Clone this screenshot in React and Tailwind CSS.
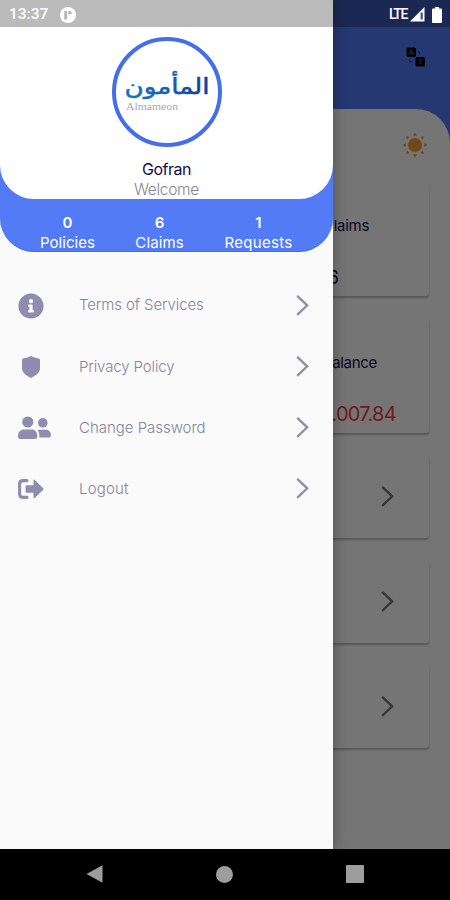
import React from 'react';
import { FaInfoCircle } from 'react-icons/fa';

const stats = [
  { value: '0', label: 'Policies', width: 'w-[55px]', spacing: 'tracking-[0.05px]' },
  { value: '6', label: 'Claims', width: 'w-[49px]', spacing: 'tracking-[0.1px]' },
  { value: '1', label: 'Requests', width: 'w-[69px]', spacing: 'tracking-[0.3px]' },
];

function ShieldIcon() {
  return (
    <svg width="18" height="22" viewBox="0 0 18 22" fill="currentColor" className="ml-1">
      <path d="M9 0C7 1.2 4 2.1 1.2 2.4Q0 2.6 0 3.8V12C0 16.6 4 19.6 9 22C14 19.6 18 16.6 18 12V3.8Q18 2.6 16.8 2.4C14 2.1 11 1.2 9 0Z" />
    </svg>
  );
}

function PeopleIcon() {
  return (
    <svg width="33" height="24" viewBox="0 0 33 24" fill="currentColor">
      <circle cx="9.8" cy="6" r="5.6" />
      <circle cx="24.8" cy="6.8" r="4.8" />
      <path d="M0 20.5C0 16 2.5 13.5 6 13.5H13.5C17 13.5 19.3 16 19.3 20.5Q19.3 23 17 23H2.3Q0 23 0 20.5Z" />
      <path d="M19.5 13.8H28C31 13.8 33 16 33 19.5Q33 21.5 31 21.5H21.3C21.5 18.5 21 15.6 19.5 13.8Z" />
    </svg>
  );
}

function LogoutIcon() {
  return (
    <svg width="26" height="20" viewBox="0 0 26 20">
      <path d="M9 1.6H5Q1.6 1.6 1.6 5V15Q1.6 18.4 5 18.4H9" fill="none" stroke="currentColor" strokeWidth="3.1" strokeLinecap="round" />
      <path
        d="M7.6 7Q7.6 6.2 8.4 6.2H15.5V1.6Q15.6 0.4 16.8 1L25.2 9.2Q26 10 25.2 10.8L16.8 19Q15.6 19.6 15.5 18.4V13.8H8.4Q7.6 13.8 7.6 13Z"
        fill="currentColor"
      />
    </svg>
  );
}

const menu = [
  { label: 'Terms of Services', icon: <FaInfoCircle size={26} />, spacing: 'tracking-[-0.1px]' },
  { label: 'Privacy Policy', icon: <ShieldIcon />, spacing: 'tracking-[-0.12px]' },
  { label: 'Change Password', icon: <PeopleIcon />, spacing: 'tracking-[-0.02px]' },
  { label: 'Logout', icon: <LogoutIcon />, spacing: 'tracking-[0.2px]' },
];

function Chevron() {
  return (
    <svg width="14" height="22" viewBox="0 0 14 22" fill="none" stroke="currentColor" strokeWidth="2.3">
      <path d="M1.2 0.8L11.2 10.3L1.2 19.8" />
    </svg>
  );
}

function TranslateIcon() {
  return (
    <svg width="20" height="20" viewBox="0 0 20 20">
      <rect x="0.5" y="0.5" width="9.5" height="9.5" rx="1.5" fill="#000" />
      <rect x="9.5" y="10" width="9.5" height="9.5" rx="1.5" fill="#000" />
      <path d="M3 8L5.2 2.8L7.4 8M3.8 6.3H6.6" fill="none" stroke="#6070a8" strokeWidth="0.8" />
      <path d="M12 13H16.5M14.3 12V13M12.5 17.5Q15.5 16 16 13M12.8 14.5L16.4 17.5" fill="none" stroke="#6070a8" strokeWidth="0.6" />
      <path d="M11.5 5H13.5V7M3.5 12V14.5H6" fill="none" stroke="#26387a" strokeWidth="0.9" />
    </svg>
  );
}

function SunIcon() {
  return (
    <svg width="26" height="26" viewBox="0 0 26 26" fill="#f2a02c">
      <circle cx="13" cy="13" r="7" />
      <path d="M13 0.5L15 3.8H11Z" />
      <path d="M13 25.5L15 22.2H11Z" />
      <path d="M0.5 13L3.8 11V15Z" />
      <path d="M25.5 13L22.2 11V15Z" />
      <path d="M4 4L7.5 5L5 7.5Z" />
      <path d="M22 4L18.5 5L21 7.5Z" />
      <path d="M4 22L7.5 21L5 18.5Z" />
      <path d="M22 22L18.5 21L21 18.5Z" />
    </svg>
  );
}

function Logo() {
  return (
    <div className="flex w-[86px] flex-col pb-[3px]">
      <svg width="86" height="32" viewBox="0 0 86 32">
        <defs>
          <linearGradient id="ink" x1="0" x2="1" y1="0" y2="0">
            <stop offset="0" stopColor="#1272c4" />
            <stop offset="0.5" stopColor="#1460b4" />
            <stop offset="1" stopColor="#0d3c9a" />
          </linearGradient>
        </defs>
        <text
          x="43"
          y="24"
          textAnchor="middle"
          textLength="85"
          lengthAdjust="spacingAndGlyphs"
          direction="rtl"
          fill="url(#ink)"
          stroke="url(#ink)"
          strokeWidth="0.5"
          className="font-['DejaVu_Sans',sans-serif] text-[22px]"
        >
          المأمون
        </text>
      </svg>
      <svg width="56" height="10" viewBox="0 0 56 10">
        <text
          x="2"
          y="7.5"
          textLength="52"
          lengthAdjust="spacingAndGlyphs"
          fill="#a8a8a8"
          className="font-['Liberation_Serif',serif] text-[10px] leading-none"
        >
          Almameon
        </text>
      </svg>
    </div>
  );
}

function StatusBar() {
  return (
    <div className="absolute inset-x-0 top-0 z-30 flex h-[27px] items-center bg-black/27 pl-[9px] pr-2 pt-[2px] font-['Roboto',sans-serif] text-white">
      <span className="text-[15.5px] font-medium">13:37</span>
      <svg className="ml-[12px]" width="16" height="16" viewBox="0 0 16 16">
        <circle cx="8" cy="8" r="8" fill="#fff" />
        <path d="M4.3 4H7V12.5H4.3ZM8.3 4H10Q11.8 4 11.8 5.7T10 7.4H8.3Z" fill="#b3b3b3" />
      </svg>
      <span className="ml-auto text-[14px] font-medium tracking-[-1.4px]">LTE</span>
      <svg className="ml-[3px]" width="15" height="15" viewBox="0 0 15 15">
        <path d="M0 14.5L14.5 0V14.5Z" fill="#fff" />
        <path d="M10.5 5.5H12.8V12.5H10.5Z" fill="#4a5580" />
      </svg>
      <svg className="ml-[7px]" width="10" height="16" viewBox="0 0 10 16" fill="#fff">
        <path d="M3 0H7V1.6H9Q10 1.6 10 2.6V15Q10 16 9 16H1Q0 16 0 15V2.6Q0 1.6 1 1.6H3Z" />
      </svg>
    </div>
  );
}

function Home() {
  return (
    <div className="flex h-full flex-col bg-[#527bf8]">
      <div className="flex h-[109px] shrink-0 justify-end pr-[24px] pt-[47px]">
        <TranslateIcon />
      </div>
      <div className="flex flex-1 flex-col rounded-t-[34px] bg-[#fefefe] px-[21px]">
        <div className="flex h-[72px] shrink-0 justify-end pr-px pt-[23px]">
          <SunIcon />
        </div>
        <div className="flex flex-col gap-[22px] text-[#120c48]">
          <div className="ml-auto flex h-[115px] w-[190px] flex-col items-end rounded-[3px] bg-white pt-[35px] shadow-[0_2px_2px_rgba(0,0,0,0.25)]">
            <span className="pr-[60px] text-[15px] leading-5 tracking-[-0.3px]">Claims</span>
            <span className="mt-[28px] pr-[90px] text-[19px] leading-7">6</span>
          </div>
          <div className="ml-auto flex h-[115px] w-[190px] flex-col items-end rounded-[3px] bg-white pt-[35px] shadow-[0_2px_2px_rgba(0,0,0,0.25)]">
            <span className="pr-[52px] text-[15px] leading-5 tracking-[-0.3px]">Balance</span>
            <span className="mt-[27px] pr-[33px] text-[20px] leading-7 tracking-[-0.7px] text-[#f33b34]">1.007.84</span>
          </div>
          {[0, 1, 2].map((row) => (
            <div
              key={row}
              className="flex h-[83px] items-center justify-end rounded-[3px] bg-white pr-[34px] text-[#777] shadow-[0_2px_2px_rgba(0,0,0,0.25)]"
            >
              <Chevron />
            </div>
          ))}
        </div>
      </div>
    </div>
  );
}

function Drawer() {
  return (
    <aside className="absolute inset-y-0 left-0 z-20 w-[333px] bg-[#fafafa] shadow-[3px_0_12px_rgba(0,0,0,0.22)]">
      {/* Profile header with the counters tucked underneath */}
      <div className="h-[252px] rounded-b-[34px] border-b border-[#3a6cf0] bg-[#527bf5]">
        <div className="flex h-[199px] flex-col items-center rounded-b-[34px] bg-white pt-[37px]">
          <div className="flex h-[110px] w-[110px] shrink-0 items-center justify-center rounded-full border-4 border-[#456fe8]">
            <Logo />
          </div>
          <span className="mt-[12px] text-[16px] leading-5 tracking-[-0.45px] text-[#120c48]">Gofran</span>
          <span className="text-[15.5px] font-light leading-[22px] tracking-[-0.3px] text-[#85858f]">Welcome</span>
        </div>
        <div className="flex justify-evenly pt-[13px] text-white">
          {stats.map((s) => (
            <div key={s.label} className={`flex flex-col items-center ${s.width}`}>
              <span className="text-[15px] font-semibold leading-[21px]">{s.value}</span>
              <span className={`text-[15px] leading-5 ${s.spacing}`}>{s.label}</span>
            </div>
          ))}
        </div>
      </div>

      <nav className="pt-[23px]">
        {menu.map((item) => (
          <div key={item.label} className="flex h-[61.2px] items-center pl-[18px] pr-[23px] text-[#8f8cb0]">
            <span className="w-[61px]">{item.icon}</span>
            <span className={`flex-1 text-[15px] font-light text-[#85859a] ${item.spacing}`}>{item.label}</span>
            <Chevron />
          </div>
        ))}
      </nav>
    </aside>
  );
}

export default function App() {
  return (
    <div className="flex h-[900px] w-[450px] flex-col overflow-hidden bg-black font-['Inter',sans-serif]">
      <div className="relative h-[849px] shrink-0 overflow-hidden">
        <Home />
        <div className="absolute inset-0 z-10 bg-black/54" />
        <Drawer />
        <StatusBar />
      </div>

      {/* Android navigation */}
      <div className="flex flex-1 items-center justify-between pb-px pl-[86px] pr-[86px]">
        <svg width="17" height="18" viewBox="0 0 17 18" fill="#9d9d9d">
          <path d="M0.5 9L16.5 0.3V17.7Z" />
        </svg>
        <div className="h-[17px] w-[17px] rounded-full bg-[#9d9d9d]" />
        <div className="h-[18px] w-[18px] rounded-[1px] bg-[#9d9d9d]" />
      </div>
    </div>
  );
}
